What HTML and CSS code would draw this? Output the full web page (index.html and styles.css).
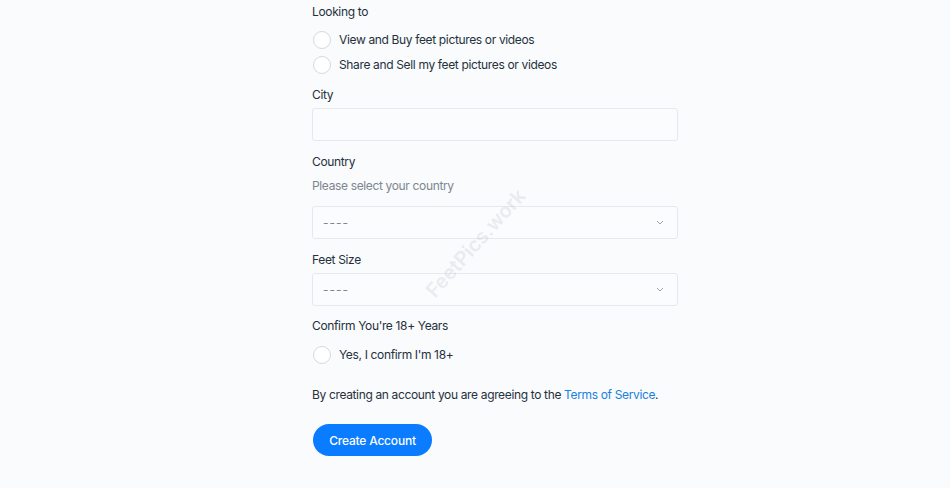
FILE: index.html
```html
<!DOCTYPE html>
<html>
<head>
<meta charset="utf-8">
<link rel="stylesheet" href="styles.css">
</head>
<body>
<form class="form">
  <div class="group">
    <div class="label">Looking to</div>
    <div class="options">
      <label class="radio"><span class="circle"></span>View and Buy feet pictures or videos</label>
      <label class="radio"><span class="circle"></span>Share and Sell my feet pictures or videos</label>
    </div>
  </div>
  <div class="group">
    <div class="label label-field">City</div>
    <div class="input"></div>
  </div>
  <div class="group">
    <div class="label">Country</div>
    <div class="help">Please select your country</div>
    <div class="select"><span>----</span>
      <svg class="chev" width="8" height="5" viewBox="0 0 8 5"><path d="M1 1l3 3 3-3" fill="none" stroke="#9aa3ad" stroke-width="1"/></svg>
    </div>
  </div>
  <div class="group group-tight">
    <div class="label label-field">Feet Size</div>
    <div class="select"><span>----</span>
      <svg class="chev" width="8" height="5" viewBox="0 0 8 5"><path d="M1 1l3 3 3-3" fill="none" stroke="#9aa3ad" stroke-width="1"/></svg>
    </div>
  </div>
  <div class="group">
    <div class="label label-confirm">Confirm You're 18+ Years</div>
    <div class="options">
      <label class="radio"><span class="circle"></span>Yes, I confirm I'm 18+</label>
    </div>
  </div>
  <p class="terms">By creating an account you are agreeing to the <a href="#">Terms of Service</a>.</p>
  <button type="button" class="btn">Create Account</button>
  <div class="watermark">FeetPics.work</div>
</form>
</body>
</html>
```
FILE: styles.css
```css
html, body {
  margin: 0;
  padding: 0;
  background: #f9fbfd;
}
body {
  font-family: Inter, "Noto Sans", sans-serif;
  font-size: 12px;
  letter-spacing: -0.35px;
  color: #26303c;
}
.form {
  position: relative;
  width: 366px;
  margin: 0 auto;
  padding-top: 4px;
  transform: translateX(20px);
}
.group {
  display: flex;
  flex-direction: column;
  margin-bottom: 13px;
}
.group-tight {
  margin-bottom: 12px;
}
.label {
  line-height: 16px;
  margin-bottom: 10px;
}
.label-field {
  margin-bottom: 5px;
}
.label-confirm {
  margin-bottom: 11px;
}
.options {
  display: flex;
  flex-direction: column;
  gap: 6px;
}
.radio {
  display: flex;
  align-items: center;
  gap: 8px;
  height: 19px;
  line-height: 19px;
}
.circle {
  width: 16px;
  height: 16px;
  border: 1px solid #d5dae0;
  border-radius: 50%;
  background: #fff;
  margin-left: 1px;
}
.input {
  height: 31px;
  border: 1px solid #e5e9ee;
  border-radius: 3px;
  background: #fbfcfe;
}
.help {
  color: #7e868f;
  line-height: 16px;
  margin-top: -2px;
  margin-bottom: 12px;
}
.select {
  height: 31px;
  border: 1px solid #e5e9ee;
  border-radius: 3px;
  background: #fbfcfe;
  display: flex;
  align-items: center;
  justify-content: space-between;
  padding: 0 13px 0 10px;
  color: #7e868f;
  letter-spacing: 1px;
}
.chev { display: block; }
.terms {
  margin: 23px 0 21px;
  line-height: 16px;
}
.terms a {
  color: #1a7fe0;
  text-decoration: none;
}
.btn {
  font-family: Inter, "Noto Sans", sans-serif;
  font-size: 12px;
  letter-spacing: -0.2px;
  font-weight: 500;
  color: #fff;
  background: #0a7cff;
  border: none;
  border-radius: 16px;
  height: 32px;
  width: 119px;
  margin-left: 1px;
  cursor: pointer;
}
.watermark {
  position: absolute;
  left: 95px;
  top: 231px;
  font-size: 20px;
  font-weight: 600;
  letter-spacing: 0;
  color: rgba(160, 170, 180, 0.2);
  transform: rotate(-48deg);
  transform-origin: center;
  white-space: nowrap;
  pointer-events: none;
}
```
